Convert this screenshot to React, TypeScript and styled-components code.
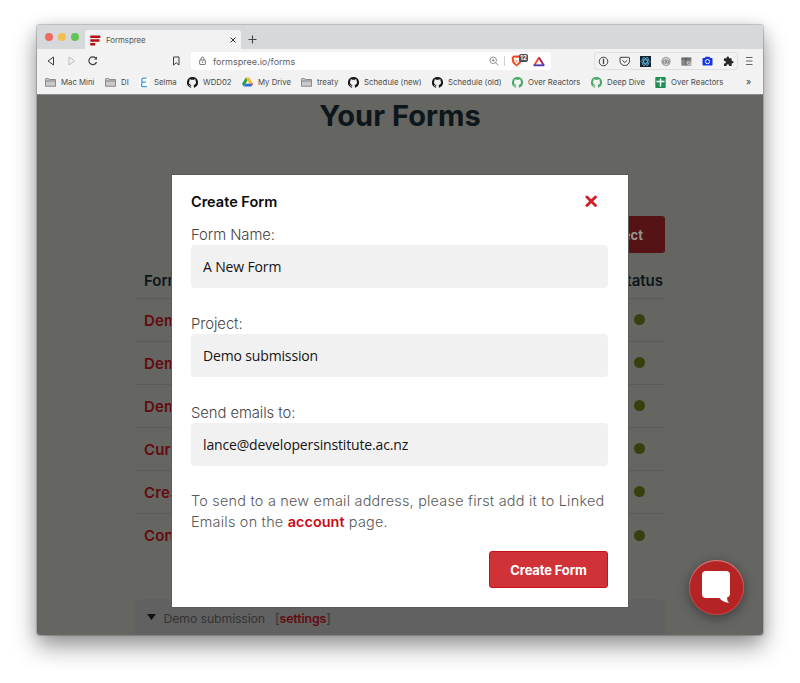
import React from "react";
import styled, { createGlobalStyle } from "styled-components";

const Global = createGlobalStyle`
  * { box-sizing: border-box; }
  html, body { margin: 0; padding: 0; background: #fff; }
  body { width: 800px; height: 683px; overflow: hidden; font-family: Inter, sans-serif; }
  svg { display: block; flex: none; }
`;

const Desktop = styled.div`
  width: 800px;
  height: 683px;
  padding: 25px 37px 0;
`;

const BrowserWindow = styled.div`
  width: 726px;
  height: 609.5px;
  display: flex;
  flex-direction: column;
  border-radius: 3px;
  box-shadow: 0 0 1px 0.5px rgba(0, 0, 0, 0.2), 0 11px 24px rgba(0, 0, 0, 0.42), 0 2px 16px rgba(0, 0, 0, 0.09);
`;

const TabBar = styled.div`
  height: 24px;
  flex: none;
  display: flex;
  align-items: flex-end;
  background: #d5d9dc;
  border-radius: 3px 3px 0 0;
  padding-left: 8px;
`;

const Lights = styled.div`
  display: flex;
  gap: 5px;
  width: 40px;
  height: 24px;
  align-items: center;
`;

const Light = styled.span<{ $color: string }>`
  width: 8px;
  height: 8px;
  border-radius: 50%;
  background: ${(p) => p.$color};
`;

const Tab = styled.div`
  width: 156px;
  height: 19px;
  display: flex;
  align-items: center;
  background: #f2f2f2;
  border-radius: 3px 3px 0 0;
  padding: 1px 5px 0 5px;
`;

const TabTitle = styled.span`
  flex: 1;
  margin-left: 5px;
  font-size: 7.8px;
  line-height: 12px;
  color: #555;
`;

const NewTab = styled.div`
  height: 19px;
  display: flex;
  align-items: center;
  margin-left: 7px;
`;

const NavBar = styled.div`
  height: 24px;
  flex: none;
  display: flex;
  align-items: center;
  background: #f2f2f2;
  padding: 0 9px 0 8px;
`;

const NavButtons = styled.div`
  width: 126px;
  display: flex;
  align-items: center;
  gap: 9px;
`;

const BookmarkSlot = styled.div`
  width: 20px;
`;

const AddressBar = styled.div`
  width: 360px;
  height: 18px;
  display: flex;
  align-items: center;
  background: #fff;
  border-radius: 3px;
  padding: 0 6px 0 7px;
`;

const Address = styled.span`
  flex: 1;
  margin-left: 6px;
  font-size: 9px;
  letter-spacing: 0.02px;
  color: #606163;
`;

const Divider = styled.span`
  width: 1px;
  height: 10px;
  background: #cfcfcf;
  margin: 0 6px 0 5px;
`;

const ShieldSlot = styled.div`
  position: relative;
  width: 22px;
`;

const Count = styled.span`
  position: absolute;
  left: 8px;
  top: -1px;
  width: 9px;
  height: 8px;
  border-radius: 2px;
  background: #4c5261;
  color: #fff;
  font-size: 6px;
  line-height: 8px;
  font-weight: 700;
  text-align: center;
`;

const Extensions = styled.div`
  width: 144px;
  height: 18px;
  margin-left: 43px;
  display: flex;
  align-items: center;
  justify-content: space-between;
  border: 1px solid #dedfe0;
  border-radius: 3px;
  padding: 0 3px;
`;

const MenuSlot = styled.div`
  margin-left: auto;
`;

const Bookmarks = styled.div`
  height: 21px;
  flex: none;
  display: grid;
  grid-template-columns: 60px 34px 48px 55px 59px 47px 84px 80px 79px 64px 91px auto;
  align-items: center;
  background: #f2f2f2;
  padding: 0 0 3px 8px;
`;

const Bookmark = styled.div`
  display: flex;
  align-items: center;
  gap: 5px;
  white-space: nowrap;
`;

const BookmarkLabel = styled.span`
  font-size: 7.8px;
  line-height: 12px;
  color: #4c4c4c;
`;

const More = styled.span`
  font-size: 9px;
  line-height: 12px;
  color: #444;
`;

const Page = styled.main`
  position: relative;
  flex: 1;
  min-height: 0;
  overflow: hidden;
  background: #656562;
  border-top: 1px solid #8c8c8c;
  border-radius: 0 0 3px 3px;
  padding: 0 98px;
  display: flex;
  flex-direction: column;
`;

const Heading = styled.h1`
  margin: 3px 0 0;
  height: 36px;
  flex: none;
  line-height: 36px;
  text-align: center;
  font-size: 29px;
  font-weight: 700;
  letter-spacing: 0.05px;
  color: #0c161b;
`;

const ProjectButton = styled.div`
  align-self: flex-end;
  margin-top: 82px;
  width: 120px;
  height: 37px;
  flex: none;
  display: flex;
  align-items: center;
  justify-content: flex-end;
  padding-right: 22px;
  border-radius: 3px;
  background: #561316;
  color: #979292;
  font-size: 13px;
  font-weight: 700;
`;

const Row = styled.div<{ $head?: boolean }>`
  height: ${(p) => (p.$head ? 46 : 43)}px;
  flex: none;
  display: flex;
  align-items: center;
  justify-content: space-between;
  padding: ${(p) => (p.$head ? "9px 2px 0 9px" : "0 20px 0 9px")};
  border-bottom: 1px solid #5b5b59;
  font-size: 15px;
  font-weight: 600;
  letter-spacing: ${(p) => (p.$head ? 0 : 0.1)}px;
  color: ${(p) => (p.$head ? "#0c161b" : "#620b0e")};
  &:last-of-type { border-bottom: 0; }
`;

const StatusDot = styled.span`
  width: 11px;
  height: 11px;
  margin-bottom: 1px;
  border-radius: 50%;
  background: #36400f;
`;

const Table = styled.section`
  height: 346px;
  flex: none;
`;

const ProjectSection = styled.section`
  flex: 1;
  display: flex;
  align-items: flex-start;
  padding: 10px 0 0 12px;
  background: #616161;
  border-radius: 6px 6px 0 0;
  font-size: 12.3px;
  line-height: 19px;
  color: #343434;
`;

const ProjectName = styled.span`
  margin: 0 10px 0 7.5px;
  letter-spacing: -0.12px;
`;

const SettingsLink = styled.b`
  font-weight: 600;
  letter-spacing: -0.1px;
  color: #620b0e;
`;

const Dialog = styled.div`
  position: absolute;
  left: 135px;
  top: 80px;
  width: 456px;
  height: 432px;
  display: flex;
  flex-direction: column;
  background: #fff;
  box-shadow: 0 0 0 1px #5b5b58;
  padding: 16px 20px 0 19px;
`;

const DialogHead = styled.header`
  display: flex;
  justify-content: space-between;
  align-items: center;
  height: 20px;
  padding-right: 10px;
  font-size: 14.5px;
  font-weight: 600;
  color: #0b0b0b;
`;

const Field = styled.label<{ $gap: number }>`
  display: block;
  margin-top: ${(p) => p.$gap}px;
`;

const FieldLabel = styled.span`
  display: block;
  height: 20px;
  line-height: 20px;
  font-size: 14.8px;
  letter-spacing: -0.06px;
  font-weight: 350;
  color: #444;
`;

const FieldBox = styled.span`
  display: flex;
  align-items: center;
  height: 43px;
  padding: 0 12px 1px;
  background: #f1f1f1;
  border-radius: 4px;
  font-family: "Open Sans", "Noto Sans", sans-serif;
  font-size: 14px;
  letter-spacing: -0.15px;
  color: #141414;
`;

const Note = styled.p`
  margin: 24px 0 0;
  font-size: 14.4px;
  line-height: 21px;
  letter-spacing: 0.235px;
  font-weight: 350;
  color: #595959;
  white-space: nowrap;
`;

const AccountLink = styled.b`
  font-weight: 600;
  letter-spacing: 0.05px;
  color: #cb0a12;
`;

const CreateButton = styled.button`
  align-self: flex-end;
  margin-top: 19px;
  width: 119px;
  height: 37px;
  flex: none;
  padding: 0;
  border: 1px solid #cb1016;
  border-radius: 3px;
  background: #d03238;
  color: #fff;
  font-family: Inter, sans-serif;
  font-size: 13px;
  font-weight: 750;
  letter-spacing: -0.15px;
  white-space: nowrap;
`;

const ChatButton = styled.div`
  position: absolute;
  left: 651.5px;
  top: 464.5px;
  width: 55px;
  height: 55px;
  display: flex;
  align-items: center;
  justify-content: center;
  border-radius: 50%;
  background: radial-gradient(circle, #b52425 60%, #aa2021 100%);
  box-shadow: 0 3px 12px rgba(0, 0, 0, 0.4), inset 0 1px 1px rgba(255, 255, 255, 0.35), inset 0 0 1px 1px rgba(255, 160, 160, 0.25);
`;

const Folder = () => (
  <svg width="11" height="9" viewBox="0 0 11 9" fill="#c9c9c9" stroke="#777" strokeWidth=".8">
    <path d="M.5 8.3V1.2Q.5.5 1.2.5H3.6L4.4 1.5H10.5V8.3Z" />
    <path d="M.5 3H10.5" />
  </svg>
);

const GitHub = ({ color = "#161616" }: { color?: string }) => (
  <svg width="11" height="11" viewBox="0 0 16 16" fill={color}>
    <path d="M8 0a8 8 0 0 0-2.53 15.59c.4.07.55-.17.55-.38v-1.49c-2.01.37-2.53-.49-2.69-.94-.09-.23-.48-.94-.82-1.13-.28-.15-.68-.52-.01-.53.63-.01 1.08.58 1.23.82.72 1.21 1.87.87 2.33.66.07-.52.28-.87.51-1.07-1.78-.2-3.64-.89-3.64-3.95 0-.87.31-1.59.82-2.15-.08-.2-.36-1.02.08-2.12 0 0 .67-.21 2.2.82a7.6 7.6 0 0 1 4 0c1.53-1.04 2.2-.82 2.2-.82.44 1.1.16 1.92.08 2.12.51.56.82 1.27.82 2.15 0 3.07-1.87 3.75-3.65 3.95.29.25.54.73.54 1.48v2.2c0 .21.15.46.55.38A8 8 0 0 0 8 0Z" />
  </svg>
);

const Selma = () => (
  <svg width="10" height="11" viewBox="0 0 10 11">
    <rect width="10" height="11" fill="#fff" />
    <path d="M7.8 1.200H4.200Q2.700 1.200 2.700 3Q2.700 5.200 4.500 5.200H7.200M4.500 5.200Q2.400 5.200 2.400 7.400Q2.400 9.600 4.200 9.600H8" fill="none" stroke="#3c9fdb" strokeWidth="1.3" />
  </svg>
);

const Drive = () => (
  <svg width="11" height="10" viewBox="0 0 11 10">
    <path d="M3.8.5L0 7L1.8 9.5L5.6 3.2Z" fill="#259b4c" />
    <path d="M3.8.5H7.2L11 7H7.6Z" fill="#f6bd24" />
    <path d="M3.4 6.8H11L9.2 9.5H1.8Z" fill="#2b6de0" />
    <path d="M8.4 6.8H11L9.2 9.5Z" fill="#e34335" />
  </svg>
);

const Sheet = () => (
  <svg width="11" height="11" viewBox="0 0 11 11">
    <rect x=".3" width="10.400" height="11" rx=".8" fill="#1e9152" />
    <path d="M5.500 1.500V9.500M1.500 4.500H9.500" stroke="#fff" strokeWidth="1.500" />
  </svg>
);

const Logo = () => (
  <svg width="11" height="11" viewBox="0 0 11 11" fill="#b30d12">
    <path d="M.3.500H10.300V3H.3ZM.3 4.200H9.500V6.800H.3ZM.3 8H5.200V10.500H.3Z" />
  </svg>
);

const Shield = () => (
  <svg width="12" height="12" viewBox="0 0 12 12">
    <path d="M2.800.4H8.400L10.600 2.200L9.800 8L5.600 11.600L1.500 8L.6 2.200Z" fill="#f4471f" />
    <path d="M2.500 2.700L4.100 2.400L5.600 3L7.100 2.400L8.700 2.700L7.800 7L5.600 9.500L3.500 7Z" fill="#fff" />
    <path d="M4.100 4.500L5.600 5.300L7.100 4.500L5.600 8Z" fill="#f4a18c" />
  </svg>
);

const Bat = () => (
  <svg width="12" height="11" viewBox="0 0 12 11" fill="none" strokeWidth="1.9">
    <path d="M6 1.500L1.300 9.200" stroke="#ff4724" />
    <path d="M6 1.500L10.700 9.200" stroke="#a72066" />
    <path d="M.6 9.300H11.400" stroke="#523ab0" />
  </svg>
);

const icon = { fill: "none", stroke: "#3f3f3f", strokeWidth: 1 };

const ExtensionIcons = () => (
  <Extensions>
    <svg width="11" height="11" viewBox="0 0 11 11" {...icon}>
      <circle cx="5.500" cy="5.500" r="4.300" />
      <path d="M5.500 3V8M4.900 3.500H5.900" strokeWidth="1.3" />
    </svg>
    <svg width="12" height="11" viewBox="0 0 12 11" {...icon}>
      <path d="M1 2Q1 1.300 1.800 1.300H9.700Q10.500 1.300 10.500 2V4.800A4.750 4.750 0 0 1 1 4.800Z" />
      <path d="M3.300 4.200L5.750 6.600L8.200 4.200" />
    </svg>
    <svg width="11" height="11" viewBox="0 0 11 11" fill="none" stroke="#5bc0e4" strokeWidth=".8">
      <rect width="11" height="11" fill="#17202b" stroke="none" />
      <ellipse cx="5.500" cy="5.500" rx="4.500" ry="1.800" />
      <ellipse cx="5.500" cy="5.500" rx="4.500" ry="1.800" transform="rotate(60 5.500 5.500)" />
      <ellipse cx="5.500" cy="5.500" rx="4.500" ry="1.800" transform="rotate(120 5.500 5.500)" />
    </svg>
    <svg width="11" height="11" viewBox="0 0 11 11">
      <circle cx="5" cy="5.500" r="4.700" fill="#a8a8a8" />
      <path d="M2.500 3.500Q5 1.500 7.500 3.500" stroke="#ddd" fill="none" />
      <rect x="1.800" y="4.700" width="6.400" height="2" rx="1" fill="#808080" />
      <circle cx="3.500" cy="5.700" r=".7" fill="#eee" />
      <circle cx="6.500" cy="5.700" r=".7" fill="#eee" />
      <path d="M3.500 8.300H6.500" stroke="#ddd" />
    </svg>
    <svg width="11" height="11" viewBox="0 0 11 11">
      <path d="M.3 1.300H10.300V9.700H.3Z" fill="#858585" />
      <path d="M.3 3H10.300M5 1.500V9.500" stroke="#515151" strokeWidth=".8" />
      <rect x="5.500" y="5.500" width="4.500" height="3.900" fill="#bcbcbc" />
      <path d="M6.200 8.800L9.300 6" stroke="#666" strokeWidth=".8" />
    </svg>
    <svg width="12" height="11" viewBox="0 0 12 11">
      <path d="M1.300 2H2.800L3.500.8H7.500L8.200 2H9.700Q10.500 2 10.500 2.800V8.700Q10.500 9.500 9.700 9.500H1.300Q.5 9.500.5 8.700V2.800Q.5 2 1.300 2Z" fill="#1534e0" />
      <circle cx="5.500" cy="5.600" r="2.100" fill="none" stroke="#fff" />
    </svg>
    <svg width="11" height="11" viewBox="0 0 24 24" fill="#282828">
      <path d="M20.500 11H19V7a2 2 0 0 0-2-2h-4V3.500a2.500 2.500 0 0 0-5 0V5H4a2 2 0 0 0-2 2v3.800h1.500a2.700 2.700 0 0 1 0 5.400H2V20a2 2 0 0 0 2 2h3.800v-1.500a2.700 2.700 0 0 1 5.400 0V22H17a2 2 0 0 0 2-2v-4h1.500a2.500 2.500 0 0 0 0-5Z" />
    </svg>
  </Extensions>
);

const bookmarks: { label: string; icon: React.ReactNode }[] = [
  { label: "Mac Mini", icon: <Folder /> },
  { label: "DI", icon: <Folder /> },
  { label: "Selma", icon: <Selma /> },
  { label: "WDD02", icon: <GitHub /> },
  { label: "My Drive", icon: <Drive /> },
  { label: "treaty", icon: <Folder /> },
  { label: "Schedule (new)", icon: <GitHub /> },
  { label: "Schedule (old)", icon: <GitHub /> },
  { label: "Over Reactors", icon: <GitHub color="#49a868" /> },
  { label: "Deep Dive", icon: <GitHub color="#49a868" /> },
  { label: "Over Reactors", icon: <Sheet /> },
];

const forms = ["Demo", "Demo", "Demo", "Curr", "Crea", "Cont"];

const fields = [
  { label: "Form Name:", value: "A New Form", gap: 14 },
  { label: "Project:", value: "Demo submission", gap: 26 },
  { label: "Send emails to:", value: "lance@developersinstitute.ac.nz", gap: 26 },
];

export default function App() {
  return (
    <>
      <Global />
      <Desktop>
        <BrowserWindow>
          <TabBar>
            <Lights>
              <Light $color="#ed6a5f" />
              <Light $color="#f5bf4f" />
              <Light $color="#61c554" />
            </Lights>
            <Tab>
              <Logo />
              <TabTitle>Formspree</TabTitle>
              <svg width="6" height="6" viewBox="0 0 6 6" stroke="#333" strokeWidth="1">
                <path d="M.6.6L5.400 5.400M5.400.6L.6 5.400" />
              </svg>
            </Tab>
            <NewTab>
              <svg width="9" height="9" viewBox="0 0 9 9" stroke="#444" strokeWidth="1.1">
                <path d="M4.500.5V8.500M.5 4.500H8.500" />
              </svg>
            </NewTab>
          </TabBar>
          <NavBar>
            <NavButtons>
              <svg width="12" height="12" viewBox="0 0 12 12" {...icon}>
                <path d="M8.500 2V10L3 6Z" strokeLinejoin="round" />
              </svg>
              <svg width="12" height="12" viewBox="0 0 12 12" fill="none" stroke="#bcbcbc">
                <path d="M3 2V10L8.500 6Z" strokeLinejoin="round" />
              </svg>
              <svg width="12" height="12" viewBox="0 0 12 12" {...icon} strokeWidth={1.2}>
                <path d="M9 3.500A3.900 3.900 0 1 0 9.500 7" />
                <path d="M10 1.500V4.500H7Z" fill="#3f3f3f" stroke="none" />
              </svg>
            </NavButtons>
            <BookmarkSlot>
              <svg width="10" height="10" viewBox="0 0 10 10" {...icon}>
                <path d="M2.500 1H8V9L5.250 6.800L2.500 9Z" />
              </svg>
            </BookmarkSlot>
            <AddressBar>
              <svg width="9" height="10" viewBox="0 0 9 10" fill="none" stroke="#666" strokeWidth=".9">
                <rect x="1.700" y="4" width="5.600" height="4.500" rx=".5" />
                <path d="M3 4V2.500A1.500 1.500 0 0 1 6 2.500V4M4.500 5.500V7" />
              </svg>
              <Address>formspree.io/forms</Address>
              <svg width="10" height="10" viewBox="0 0 10 10" fill="none" stroke="#777" strokeWidth=".8">
                <circle cx="4.200" cy="4.300" r="3.300" />
                <path d="M6.600 6.700L9.300 9.400M2.700 4.300H5.700M4.200 2.800V5.800" />
              </svg>
              <Divider />
              <ShieldSlot>
                <Shield />
                <Count>12</Count>
              </ShieldSlot>
              <Bat />
            </AddressBar>
            <ExtensionIcons />
            <MenuSlot>
              <svg width="9" height="10" viewBox="0 0 9 10" stroke="#555" strokeWidth=".9">
                <path d="M1 1.500H7.500M1 5H7.500M1 8.500H7.500" />
              </svg>
            </MenuSlot>
          </NavBar>
          <Bookmarks>
            {bookmarks.map((b, i) => (
              <Bookmark key={i}>
                {b.icon}
                <BookmarkLabel>{b.label}</BookmarkLabel>
              </Bookmark>
            ))}
            <More>»</More>
          </Bookmarks>
          <Page>
            <Heading>Your Forms</Heading>
            <ProjectButton>ject</ProjectButton>
            <Table>
              <Row $head>
                <span>Form</span>
                <span>Status</span>
              </Row>
              {forms.map((name, i) => (
                <Row key={i}>
                  <span>{name}</span>
                  <StatusDot />
                </Row>
              ))}
            </Table>
            <ProjectSection>
              <svg width="9" height="18" viewBox="0 0 9 18">
                <path d="M0 5H9L4.500 11Z" fill="#111" />
              </svg>
              <ProjectName>Demo submission</ProjectName>
              [<SettingsLink>settings</SettingsLink>]
            </ProjectSection>
            <Dialog>
              <DialogHead>
                <span>Create Form</span>
                <svg width="13" height="13" viewBox="0 0 13 13" stroke="#cf2027" strokeWidth="2.800" strokeLinecap="round">
                  <path d="M1.900 1.900L10.500 10.500M10.500 1.900L1.900 10.500" />
                </svg>
              </DialogHead>
              {fields.map((f) => (
                <Field key={f.label} $gap={f.gap}>
                  <FieldLabel>{f.label}</FieldLabel>
                  <FieldBox>{f.value}</FieldBox>
                </Field>
              ))}
              <Note>
                To send to a new email address, please first add it to Linked
                <br />
                Emails on the <AccountLink>account</AccountLink> page.
              </Note>
              <CreateButton>Create Form</CreateButton>
            </Dialog>
            <ChatButton>
              <svg width="30" height="34" viewBox="0 0 30 34" fill="#fff">
                <path d="M5 1H25Q29 1 29 5V23.500Q29 27 26 27.500Q26 31 28 33Q21 32 18.500 28H5Q1 28 1 24V5Q1 1 5 1Z" />
              </svg>
            </ChatButton>
          </Page>
        </BrowserWindow>
      </Desktop>
    </>
  );
}
